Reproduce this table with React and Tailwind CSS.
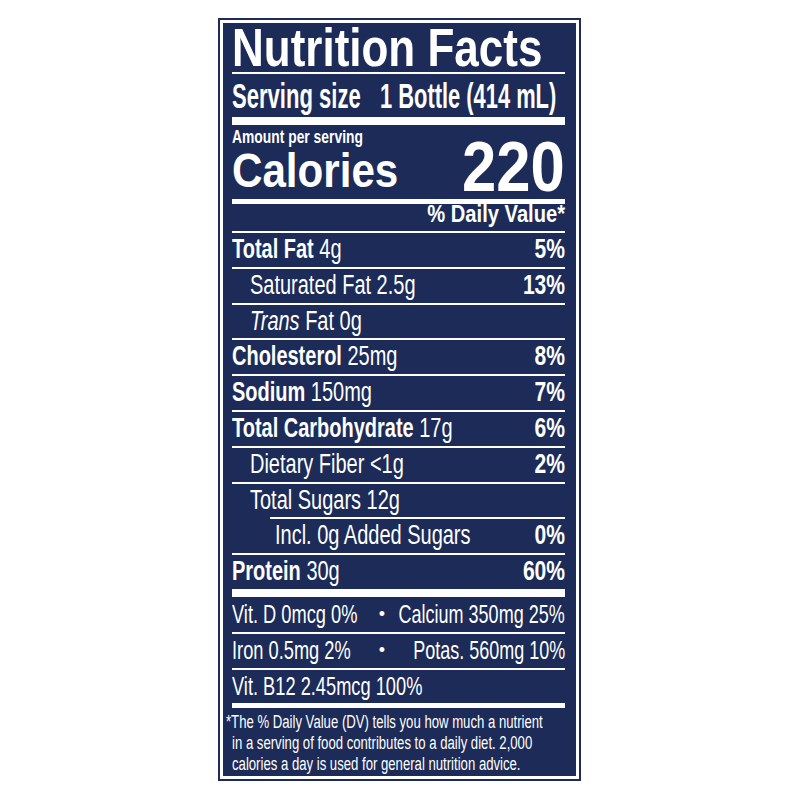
import React from "react";

const rows = [
  { b: "Total Fat", r: " 4g", p: "5%", indent: 0 },
  { r: "Saturated Fat 2.5g", p: "13%", indent: 1 },
  { i: "Trans", r: " Fat 0g", p: "", indent: 1 },
  { b: "Cholesterol", r: " 25mg", p: "8%", indent: 0 },
  { b: "Sodium", r: " 150mg", p: "7%", indent: 0 },
  { b: "Total Carbohydrate", r: " 17g", p: "6%", indent: 0 },
  { r: "Dietary Fiber <1g", p: "2%", indent: 1 },
  { r: "Total Sugars 12g", p: "", indent: 1 },
  { r: "Incl. 0g Added Sugars", p: "0%", indent: 2 },
  { b: "Protein", r: " 30g", p: "60%", indent: 0 },
];

function Row({ row }) {
  const pad = row.indent === 1 ? "pl-[18px]" : row.indent === 2 ? "pl-[43px]" : "";
  return (
    <div className="h-[35.8px] flex flex-col">
      <div className={"h-[2px] shrink-0 bg-white " + (row.indent === 2 ? "ml-[38px]" : "")} />
      <div className="flex-1 flex text-[27px] leading-[32px]">
        <div className={"flex-1 min-w-0 " + pad}>
          <span className="inline-block whitespace-nowrap origin-left scale-x-[0.74]">
            {row.b && <span className="font-bold">{row.b}</span>}
            {row.i && <span className="italic">{row.i}</span>}
            <span>{row.r}</span>
          </span>
        </div>
        <div className="shrink-0 font-bold">
          <span className="inline-block whitespace-nowrap origin-right scale-x-[0.78]">{row.p}</span>
        </div>
      </div>
    </div>
  );
}

function VitRow({ left, right, border }) {
  return (
    <div
      className={
        "grid grid-cols-[140px_20px_minmax(0,1fr)] text-[25px] whitespace-nowrap " +
        (border ? "h-[35.3px] border-t-2 border-white leading-[33.3px]" : "h-[35.3px] leading-[35.3px]")
      }
    >
      <div className="min-w-0">
        <span className="inline-block origin-left scale-x-[0.73]">{left}</span>
      </div>
      <div className="text-center text-[18px]">{right ? "•" : ""}</div>
      <div className="min-w-0 flex justify-end">
        {right && <span className="inline-block shrink-0 origin-right scale-x-[0.72]">{right}</span>}
      </div>
    </div>
  );
}

export default function App() {
  return (
    <div className="w-full h-[800px] bg-white pt-[18px] font-['Liberation_Sans',Arial,sans-serif] text-white">
      <div className="ml-[218px] w-[363px] h-[763px] border-2 border-[#1c2b57] bg-white p-[3px]">
        <div className="h-full bg-[#1c2b57] pl-[9px] pr-[11px] overflow-hidden">
          <div className="h-[49px] border-b-2 border-white box-content">
            <div className="text-[53px] leading-[50px] font-bold">
              <span className="inline-block whitespace-nowrap origin-left scale-x-[0.83]">Nutrition Facts</span>
            </div>
          </div>
          <div className="h-[43px] flex text-[35px] leading-[43px] font-bold">
            <div className="w-[148px] shrink-0 min-w-0">
              <span className="inline-block whitespace-nowrap origin-left scale-x-[0.63]">Serving size</span>
            </div>
            <div className="flex-1 min-w-0">
              <span className="inline-block whitespace-nowrap origin-left scale-x-[0.625]">1 Bottle (414 mL)</span>
            </div>
          </div>
          <div className="h-[8px] bg-white" />
          <div className="h-[74px] flex font-bold">
            <div className="flex-1 min-w-0 flex flex-col">
              <div className="mt-[3px] text-[18px] leading-[18px]">
                <span className="inline-block whitespace-nowrap origin-left scale-x-[0.77]">Amount per serving</span>
              </div>
              <div className="mt-[2px] text-[49px] leading-[44px]">
                <span className="inline-block whitespace-nowrap origin-left scale-x-[0.86]">Calories</span>
              </div>
            </div>
            <div className="shrink-0 mt-[12px] text-[70px] leading-[60px]">
              <span className="inline-block whitespace-nowrap origin-right scale-x-[0.88]">220</span>
            </div>
          </div>
          <div className="h-[5px] bg-white" />
          <div className="h-[27px] flex justify-end font-bold text-[24px] leading-[20px]">
            <span className="inline-block shrink-0 whitespace-nowrap origin-right scale-x-[0.84]">% Daily Value*</span>
          </div>
          {rows.map((r, i) => (
            <Row key={i} row={r} />
          ))}
          <div className="h-[8px] bg-white" />
          <VitRow left="Vit. D 0mcg 0%" right="Calcium 350mg 25%" />
          <VitRow left="Iron 0.5mg 2%" right="Potas. 560mg 10%" border />
          <VitRow left="Vit. B12 2.45mcg 100%" border />
          <div className="h-[5px] bg-white" />
          <div className="pt-[4px] text-[18px] leading-[21px]">
            <div className="-ml-[6px]">
              <span className="inline-block whitespace-nowrap origin-left scale-x-[0.73]">*The % Daily Value (DV) tells you how much a nutrient</span>
            </div>
            <div>
              <span className="inline-block whitespace-nowrap origin-left scale-x-[0.73]">in a serving of food contributes to a daily diet. 2,000</span>
            </div>
            <div>
              <span className="inline-block whitespace-nowrap origin-left scale-x-[0.73]">calories a day is used for general nutrition advice.</span>
            </div>
          </div>
        </div>
      </div>
    </div>
  );
}
